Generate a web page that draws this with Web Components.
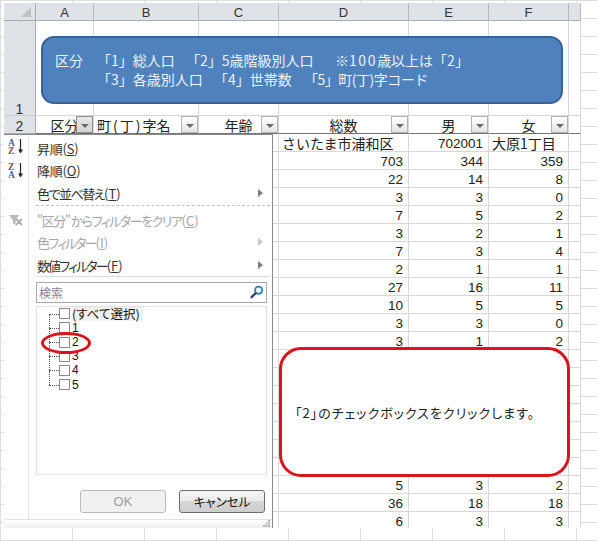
<!DOCTYPE html>
<html lang="ja">
<head>
<meta charset="UTF-8">
<title>フィルター</title>
<style>
  html, body { margin: 0; height: 100%; }
  body {
    overflow: hidden;
    font-family: "Noto Sans CJK JP", "Liberation Sans", sans-serif;
    background-color: #fff;
    background-image:
      repeating-linear-gradient(to right, #dedede 0 1px, transparent 1px 72px),
      repeating-linear-gradient(to bottom, #dedede 0 1px, transparent 1px 18px);
  }
  x-menu-item span { letter-spacing: 0; }
</style>
</head>
<body>

<x-sheet>
  <x-banner>
    <div><span style="width:42px">区分</span><span style="width:89px">「1」総人口</span><span style="width:149px">「2」5歳階級別人口</span><span>※<b style="font-weight:normal;letter-spacing:1.6px">100</b>歳以上は「2」</span></div>
    <div><span style="width:42px"></span><span style="width:117px">「3」各歳別人口</span><span style="width:90px">「4」世帯数</span><span style="letter-spacing:-.5px">「5」町(丁)字コード</span></div>
  </x-banner>

  <x-filter-menu>
    <x-menu-item icon="az">昇順(<u>S</u>)</x-menu-item>
    <x-menu-item icon="za">降順(<u>O</u>)</x-menu-item>
    <x-menu-item arrow style="letter-spacing:-1.5px">色で並べ替え<span>(<u>T</u>)</span></x-menu-item>
    <x-sep slot="sep1"></x-sep>
    <x-menu-item slot="lower" icon="clear" disabled style="letter-spacing:-1.5px">"区分" からフィルターをクリア<span>(<u>C</u>)</span></x-menu-item>
    <x-menu-item slot="lower" arrow disabled style="letter-spacing:-1.9px">色フィルター<span>(<u>I</u>)</span></x-menu-item>
    <x-menu-item slot="lower" arrow style="letter-spacing:-1.9px">数値フィルター<span>(<u>F</u>)</span></x-menu-item>
    <x-tree-row slot="tree" hot>(すべて選択)</x-tree-row>
    <x-tree-row slot="tree" num>1</x-tree-row>
    <x-tree-row slot="tree" num>2</x-tree-row>
    <x-tree-row slot="tree" num>3</x-tree-row>
    <x-tree-row slot="tree" num>4</x-tree-row>
    <x-tree-row slot="tree" num>5</x-tree-row>
  </x-filter-menu>

  <x-ring></x-ring>
  <x-callout>「2」のチェックボックスをクリックします。</x-callout>
</x-sheet>

<script>
  const JP = '"Noto Sans CJK JP", "Liberation Sans", sans-serif'

  const rows = [
    ['4', 'さいたま市浦和区', '702001', '大原1丁目'],
    ['', '703', '344', '359'],
    ['', '22', '14', '8'],
    ['0', '3', '3', '0'],
    ['', '7', '5', '2'],
    ['2', '3', '2', '1'],
    ['3', '7', '3', '4'],
    ['4', '2', '1', '1'],
    ['', '27', '16', '11'],
    ['5', '10', '5', '5'],
    ['6', '3', '3', '0'],
    ['7', '3', '1', '2'],
    ['8', '', '', ''],
    ['9', '', '', ''],
    ['', '', '', ''],
    ['0', '', '', ''],
    ['', '', '', ''],
    ['2', '', '', ''],
    ['3', '', '', '1'],
    ['4', '5', '3', '2'],
    ['', '36', '18', '18'],
    ['5', '6', '3', '3']
  ]

  customElements.define('x-head', class extends HTMLElement {
    connectedCallback() {
      const shadow = this.attachShadow({mode: 'open'})
      shadow.innerHTML = `
        <style>
          :host { display: block; position: relative; height: 17px; line-height: 19px; font-size: 14px; text-align: center; white-space: nowrap; }
          :host([left]) { text-align: left; padding-left: 3px; }
          button {
            position: absolute; right: 0; top: 0; width: 17px; height: 17px; padding: 0;
            border: 1px solid #b4b4b4; background: linear-gradient(#fff, #e4e4e4);
          }
          :host([active]) button { border-color: #8c8c8c; background: linear-gradient(#e8e8e8, #d4d4d4); }
          button::after {
            content: ""; display: block; width: 0; height: 0; margin: 2px auto 0;
            border: 4px solid transparent; border-bottom: 0; border-top-color: #6a6a6a;
          }
        </style>
        <slot></slot><button></button>`
    }
  })

  customElements.define('x-sheet', class extends HTMLElement {
    connectedCallback() {
      const heads = [['区分', 'active'], ['町<span style="margin:0 2px">(</span>丁<span style="margin:0 2px">)</span>字名', 'left'], ['年齢', ''], ['総数', ''], ['男', ''], ['女', '']]
      const letter = c => `<div class="hd col">${c}</div>`
      let html = '<div class="hd corner"><i></i></div>' + 'ABCDEF'.split('').map(letter).join('') + '<div class="hd col"></div>'
      html += '<div class="hd row tall">1</div><div class="c tall"></div><div class="c tall"></div><div class="c tall"></div><div class="c tall"></div><div class="c tall"></div><div class="c tall"></div><div class="c tall"></div>'
      html += '<div class="hd row dk">2</div>' + heads.map(h => `<div class="c dk"><x-head ${h[1]}>${h[0]}</x-head></div>`).join('') + '<div class="c dk"></div>'
      rows.forEach(r => {
        const isText = v => /[^0-9]/.test(v)
        html += '<div class="hd row"></div><div class="c"></div><div class="c"></div>'
        html += `<div class="c n">${r[0]}</div>`
        html += r.slice(1).map(v => `<div class="c ${isText(v) ? 't' : 'n'}">${v}</div>`).join('')
        html += '<div class="c"></div>'
      })
      const shadow = this.attachShadow({mode: 'open'})
      shadow.innerHTML = `
        <style>
          :host {
            display: grid; position: relative; box-sizing: border-box; margin: 3px 0 0 4px;
            width: 577px; height: 525px; overflow: hidden; color: #111;
            grid-template-columns: 32px 58px 105px 80px 130px 80px 80px 12px;
            grid-auto-rows: 18px; grid-template-rows: 18px 95px 18px;
            background: #fff;
          }
          .hd { background: #dfe2e6; box-sizing: border-box; border-right: 1px solid #b8bcc2; border-bottom: 1px solid #c6c9cd; color: #333; font: 13px/18px "Liberation Sans", sans-serif; text-align: center; }
          .col { border-bottom: 1px solid #a9adb3; line-height: 20px; }
          .corner { position: relative; border-bottom-color: #a9adb3; border-right-color: #a9adb3; }
          .corner i { position: absolute; right: 4px; bottom: 3px; width: 0; height: 0; border-style: solid; border-width: 0 0 10px 10px; border-color: transparent transparent #bfc3c8 transparent; }
          .row { font-size: 14px; border-right-color: #a9adb3; }
          .tall { display: flex; align-items: flex-end; justify-content: center; line-height: 12px; }
          .c { box-sizing: border-box; border-right: 1px solid #d8d8d8; border-bottom: 1px solid #d8d8d8; font: 13.5px/18px "Liberation Sans", sans-serif; white-space: nowrap; color: #222; }
          .c.tall { display: block; }
          .n { text-align: right; padding-right: 5px; line-height: 20px; }
          .t { font: 14px/19px ${JP}; padding-left: 3px; }
          .dk { border-bottom: 1px solid #737373; font-family: ${JP}; }
          .hd.dk { font: 14px/20px "Liberation Sans", sans-serif; border-bottom: 1px solid #a9adb3; }
        </style>
        ${html}
        <slot></slot>`
    }
  })

  customElements.define('x-banner', class extends HTMLElement {
    connectedCallback() {
      this.attachShadow({mode: 'open'}).innerHTML = `
        <style>
          :host {
            position: absolute; left: 37px; top: 33px; width: 522px; height: 68px; box-sizing: border-box;
            display: flex; flex-direction: column; justify-content: center; gap: 1px; padding: 0 0 2px 12px;
            background: #4f81bd; border: 2px solid #3a6394; border-radius: 13px;
            color: #edf2f9; font-size: 14px; line-height: 18px; white-space: nowrap;
          }
          ::slotted(div) { display: flex; }
        </style>
        <slot></slot>`
      this.querySelectorAll('span').forEach(s => { s.style.flex = 'none'; s.style.display = 'block' })
    }
  })

  customElements.define('x-sep', class extends HTMLElement {
    connectedCallback() {
      this.attachShadow({mode: 'open'}).innerHTML = `<style>:host { display: block; height: 0; margin: 0 2px 3px 32px; border-top: 1px dashed #c4c4c4; }</style>`
    }
  })

  const icons = {
    az: `<text x="1" y="8" fill="#3b62a8">A</text><text x="1" y="15.5" fill="#a4403c">Z</text>`,
    za: `<text x="1" y="8" fill="#a4403c">Z</text><text x="1" y="15.5" fill="#3b62a8">A</text>`
  }
  const arrowDown = `<path d="M13.5 1v12" stroke="#222" stroke-width="1.2"/><path d="M11 11.5h5l-2.5 4z" fill="#222"/>`

  customElements.define('x-menu-item', class extends HTMLElement {
    connectedCallback() {
      const kind = this.getAttribute('icon')
      let icon = ''
      if (kind === 'az' || kind === 'za') {
        icon = `<svg class="${kind}" viewBox="0 0 20 17" width="20" height="17" font-family="Liberation Serif" font-weight="bold" font-size="9.5">${icons[kind]}${arrowDown}</svg>`
      }
      if (kind === 'clear') {
        icon = `<svg viewBox="0 0 20 17" width="20" height="17"><path d="M2 3h10L8.5 8v5L6 11V8z" fill="#b4b8bc"/><path d="M9 7l6 6M15 7l-6 6" stroke="#a8acb0" stroke-width="1.8"/></svg>`
      }
      this.attachShadow({mode: 'open'}).innerHTML = `
        <style>
          :host { display: flex; align-items: center; position: relative; height: 22.6px; padding-left: 33px; padding-right: 10px; font-size: 13px; font-feature-settings: "palt"; letter-spacing: -.2px; color: #333; white-space: pre; }
          :host([disabled]) { color: #a6a6a6; }
          svg { position: absolute; left: 3px; top: 3px; }
          svg.az { top: 1px; }
          svg.za { top: 2px; }
          i { position: absolute; right: 9px; top: 7px; width: 0; height: 0; border: 4px solid transparent; border-right: 0; border-left: 5px solid #7f7f7f; }
          :host([disabled]) i { border-left-color: #c8c8c8; }
        </style>
        ${icon}<slot></slot>${this.hasAttribute('arrow') ? '<i></i>' : ''}`
    }
  })

  customElements.define('x-tree-row', class extends HTMLElement {
    connectedCallback() {
      this.attachShadow({mode: 'open'}).innerHTML = `
        <style>
          :host { display: flex; align-items: center; position: relative; height: 14.2px; padding-left: 22px; font-size: 12.5px; color: #111; white-space: nowrap; }
          :host([num]) { font: 12px/14px "Liberation Sans", sans-serif; }
          i { flex: none; box-sizing: border-box; width: 11px; height: 11px; border: 1px solid #8a8a8a; background: #fff; margin-right: 2px; }
          b { position: absolute; left: 12px; top: 7px; width: 10px; border-top: 1px dotted #555; }
          u { position: absolute; left: 12px; top: -7px; height: 14px; border-left: 1px dotted #555; }
          span { font-weight: normal; padding-right: 3px; font-feature-settings: "palt"; line-height: 14px; }
          :host([hot]) span { background: #f1f1f1; }
        </style>
        ${this.hasAttribute('hot') ? '' : '<u></u>'}<b></b><i></i><span><slot></slot></span>`
    }
  })

  customElements.define('x-filter-menu', class extends HTMLElement {
    connectedCallback() {
      this.attachShadow({mode: 'open'}).innerHTML = `
        <style>
          :host {
            position: absolute; left: 0; top: 131px; width: 269px; height: 394px; box-sizing: border-box;
            display: flex; flex-direction: column; padding-top: 2px;
            background: #fff; border-top: 1px solid #8a8a8a; border-right: 1px solid #8c8c8c;
            color: #333; font-family: ${JP};
          }
          .strip { position: absolute; left: 24px; top: 0; bottom: 9px; border-left: 1px solid #e2e4e7; }
          .rule { height: 0; margin: -1px 2px 0 32px; border-top: 1px solid #dcdcdc; }
          .search {
            display: flex; align-items: center; justify-content: space-between; box-sizing: border-box;
            height: 21px; margin: 5px 5px 0 32px; padding: 0 2px 0 2px; border: 1px solid #a7abb0;
            font-size: 12px; color: #8a8a8a; background: #fff; position: relative;
          }
          .tree { box-sizing: border-box; height: 169px; margin: 3px 5px 0 32px; border: 1px solid #e2e2e2; background: #fff; position: relative; }
          .buttons { display: flex; justify-content: flex-end; gap: 13px; margin: 15px 7px 0 0; position: relative; }
          .btn { box-sizing: border-box; width: 86px; height: 23px; border-radius: 3px; display: flex; align-items: center; justify-content: center; font-size: 12.5px; font-feature-settings: "palt"; }
          .ok { border: 1px solid #b9b9b9; background: #f1f1f1; color: #9c9c9c; font-family: "Liberation Sans", sans-serif; font-size: 13px; }
          .cancel { border: 1px solid #6e6e6e; background: linear-gradient(#f5f5f5 0, #ebebeb 45%, #d6d6d6 50%, #cfcfcf 100%); color: #111; }
          .grip {
            position: absolute; left: 0; right: 0; bottom: 0; height: 9px; box-sizing: border-box;
            border-top: 1px solid #dde5e8; background: linear-gradient(#fff, #eef0f1);
          }
          .grip svg { position: absolute; right: 2px; bottom: 1px; }
        </style>
        <div class="strip"></div>
        <slot></slot>
        <slot name="sep1"></slot>
        <slot name="lower"></slot>
        <div class="rule"></div>
        <div class="search">
          <span>検索</span>
          <svg viewBox="0 0 14 14" width="14" height="14">
            <circle cx="8.6" cy="5.2" r="3.6" fill="#e8f2fa" stroke="#2f7fc0" stroke-width="1.8"/>
            <path d="M5.8 8L1.6 12.2" stroke="#2b4a73" stroke-width="2.4" stroke-linecap="round"/>
          </svg>
        </div>
        <div class="tree"><slot name="tree"></slot></div>
        <div class="buttons"><div class="btn ok">OK</div><div class="btn cancel">キャンセル</div></div>
        <div class="grip">
          <svg viewBox="0 0 7 7" width="7" height="7" fill="#b5b5b5"><rect x="5" y="0" width="2" height="2"/><rect x="2.5" y="2.5" width="2" height="2"/><rect x="5" y="2.5" width="2" height="2"/><rect x="0" y="5" width="2" height="2"/><rect x="2.5" y="5" width="2" height="2"/><rect x="5" y="5" width="2" height="2"/></svg>
        </div>`
    }
  })

  customElements.define('x-ring', class extends HTMLElement {
    connectedCallback() {
      this.attachShadow({mode: 'open'}).innerHTML = `
        <style>:host { position: absolute; left: 37px; top: 329px; width: 50px; height: 22px; box-sizing: border-box; border: 3px solid #d9141c; border-radius: 50%; }</style>`
    }
  })

  customElements.define('x-callout', class extends HTMLElement {
    connectedCallback() {
      this.attachShadow({mode: 'open'}).innerHTML = `
        <style>
          :host {
            position: absolute; left: 275px; top: 344px; width: 291px; height: 130px; box-sizing: border-box;
            display: flex; align-items: center; padding: 0 0 0 13px;
            background: #fff; border: 3px solid #d9141c; border-radius: 22px;
            color: #222; font-size: 13px; font-feature-settings: "palt"; letter-spacing: 1px; white-space: nowrap;
          }
        </style>
        <slot></slot>`
    }
  })
</script>
</body>
</html>
